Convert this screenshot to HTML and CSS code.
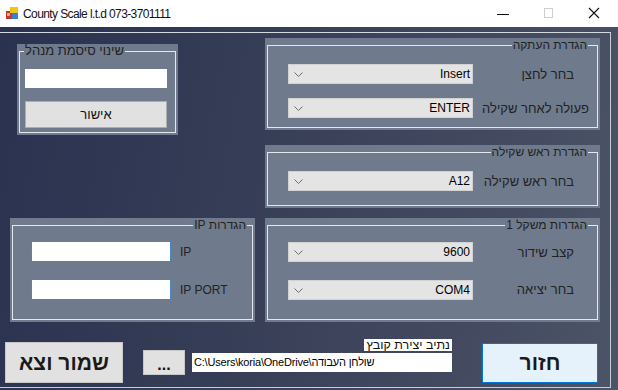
FILE: index.html
```html
<!DOCTYPE html>
<html lang="he">
<head>
	<meta charset="UTF-8">
	<title>County Scale</title>
	<link rel="stylesheet" href="styles.css">
</head>
<body>
	<div class="window">
		<div class="titlebar">
			<svg class="app-icon" width="13" height="13" viewBox="0 0 13 13">
				<rect x="0" y="4" width="6" height="8" fill="#c0392b"/>
				<rect x="4" y="0" width="8" height="6" fill="#f1c40f"/>
				<rect x="6" y="6" width="6" height="6" fill="#3b7dd8"/>
				<rect x="1" y="6" width="3" height="3" fill="#e8a090"/>
			</svg>
			<span class="title">County Scale l.t.d 073-3701111</span>
			<div class="controls">
				<svg width="46" height="26" viewBox="0 0 46 26"><line x1="17" y1="13.5" x2="29" y2="13.5" stroke="#111" stroke-width="1"/></svg>
				<svg width="46" height="26" viewBox="0 0 46 26"><rect x="18.5" y="7.5" width="8" height="9" fill="none" stroke="#cfcfcf" stroke-width="1"/></svg>
				<svg width="46" height="26" viewBox="0 0 46 26"><path d="M17 7 L27 17 M27 7 L17 17" stroke="#111" stroke-width="1.1" fill="none"/></svg>
			</div>
		</div>

		<div class="client">
			<div class="frame">
				<div class="upper">
					<div class="group admin">
						<fieldset dir="ltr">
							<legend dir="rtl">שינוי סיסמת מנהל</legend>
							<div class="textbox pass"></div>
							<div class="button ok">אישור</div>
						</fieldset>
					</div>

					<div class="stack">
						<div class="group copy">
							<fieldset dir="rtl">
								<legend>הגדרת העתקה</legend>
								<div class="row first">
									<span class="label">בחר לחצן</span>
									<div class="combo"><svg width="9" height="5" viewBox="0 0 9 5"><polyline points="0.5,0.5 4.5,4.5 8.5,0.5" fill="none" stroke="#6d6d6d"/></svg><span>Insert</span></div>
								</div>
								<div class="row second">
									<span class="label long">פעולה לאחר שקילה</span>
									<div class="combo"><svg width="9" height="5" viewBox="0 0 9 5"><polyline points="0.5,0.5 4.5,4.5 8.5,0.5" fill="none" stroke="#6d6d6d"/></svg><span>ENTER</span></div>
								</div>
							</fieldset>
						</div>

						<div class="group head">
							<fieldset dir="rtl">
								<legend>הגדרת ראש שקילה</legend>
								<div class="row first">
									<span class="label">בחר ראש שקילה</span>
									<div class="combo"><svg width="9" height="5" viewBox="0 0 9 5"><polyline points="0.5,0.5 4.5,4.5 8.5,0.5" fill="none" stroke="#6d6d6d"/></svg><span>A12</span></div>
								</div>
							</fieldset>
						</div>
					</div>
				</div>

				<div class="middle">
					<div class="group ip">
						<fieldset dir="rtl">
							<legend class="near">הגדרות IP</legend>
							<div class="row ltr first">
								<div class="textbox net"></div>
								<span class="label">IP</span>
							</div>
							<div class="row ltr second">
								<div class="textbox net"></div>
								<span class="label">IP PORT</span>
							</div>
						</fieldset>
					</div>

					<div class="group scale">
						<fieldset dir="rtl">
							<legend>הגדרות משקל 1</legend>
							<div class="row first">
								<span class="label">קצב שידור</span>
								<div class="combo"><svg width="9" height="5" viewBox="0 0 9 5"><polyline points="0.5,0.5 4.5,4.5 8.5,0.5" fill="none" stroke="#6d6d6d"/></svg><span>9600</span></div>
							</div>
							<div class="row second">
								<span class="label">בחר יציאה</span>
								<div class="combo"><svg width="9" height="5" viewBox="0 0 9 5"><polyline points="0.5,0.5 4.5,4.5 8.5,0.5" fill="none" stroke="#6d6d6d"/></svg><span>COM4</span></div>
							</div>
						</fieldset>
					</div>
				</div>

				<div class="bottom">
					<div class="button big save">שמור וצא</div>
					<div class="button dots">...</div>
					<div class="path">
						<span class="path-label">נתיב יצירת קובץ</span>
						<div class="path-box">C:\Users\koria\OneDrive\שולחן העבודה</div>
					</div>
					<div class="button big back">חזור</div>
				</div>
			</div>
		</div>
	</div>
</body>
</html>
```

FILE: styles.css
```css
* {
	box-sizing: border-box;
}

body {
	margin: 0;
	font-family: "Liberation Sans", Arial, sans-serif;
	font-size: 12px;
	color: #000;
	background: #fff;
}

.window {
	width: 618px;
	height: 390px;
	display: flex;
	flex-direction: column;
	overflow: hidden;
}

/* title bar */
.titlebar {
	height: 27px;
	background: #fff;
	display: flex;
	align-items: center;
	flex: none;
}

.app-icon {
	margin-left: 6px;
}

.title {
	margin-left: 4px;
	font-size: 12px;
	letter-spacing: -0.6px;
	color: #111;
}

.controls {
	margin-left: auto;
	display: flex;
}

.controls svg {
	display: block;
}

/* client area */
.client {
	flex: 1;
	background: linear-gradient(100deg, #2b3250 0%, #363d56 40%, #434a60 75%, #4c5467 100%);
	padding-top: 5px;
}

.frame {
	width: 611px;
	height: 356px;
	border-top: 1px solid #d4d9e0;
	border-right: 1px solid #c8cdd5;
	border-bottom: 1px solid #c8cdd5;
}

.upper {
	display: flex;
	justify-content: space-between;
	align-items: flex-start;
}

.stack {
	width: 335px;
	margin-right: 10px;
	margin-top: 5px;
}

.middle {
	display: flex;
	justify-content: space-between;
	margin-top: 10px;
}

/* group boxes */
.group {
	background: #6f7b8c;
	padding: 0 2px 2px;
}

.group fieldset {
	height: 100%;
	margin: 0;
	padding: 0;
	min-width: 0;
	border: 1px solid #e4e8ec;
}

.group legend {
	padding: 0 1px;
	margin-right: 9px;
	font-size: 12px;
	line-height: 14px;
	color: #222;
}

.group legend.near {
	margin-right: 5px;
}

.admin {
	width: 161px;
	height: 91px;
	margin-left: 17px;
	margin-top: 11px;
}

.admin legend {
	margin-left: 4px;
	margin-right: 0;
	font-size: 13px;
}

.copy {
	height: 92px;
}

.head {
	height: 63px;
	margin-top: 15px;
}

.ip {
	width: 245px;
	height: 104px;
	margin-left: 10px;
}

.scale {
	width: 335px;
	height: 104px;
	margin-right: 10px;
}

/* rows */
.row {
	display: flex;
	justify-content: space-between;
	align-items: center;
	height: 20px;
}

.copy .row.first,
.head .row.first {
	margin-top: 12px;
}

.copy .row.second {
	margin-top: 14px;
}

.scale .row.first {
	margin-top: 10px;
}

.scale .row.second {
	margin-top: 17px;
	height: 21px;
}

.label {
	margin-right: 23px;
	font-size: 13px;
	color: #222;
	white-space: nowrap;
}

.label.long {
	margin-right: 8px;
}

.combo {
	width: 185px;
	height: 20px;
	margin-left: 20px;
	background: #e4e4e4;
	border: 1px solid #d2d2d2;
	display: flex;
	align-items: center;
	direction: ltr;
	padding: 0 2px 0 5px;
	font-size: 12px;
}

.combo svg {
	display: block;
	margin-top: 1px;
}

.combo span {
	margin-left: auto;
}

/* ip rows */
.row.ltr {
	direction: ltr;
	justify-content: flex-start;
	height: 21px;
}

.ip .row.first {
	margin-top: 9px;
}

.ip .row.second {
	margin-top: 17px;
}

.ip .label {
	margin: 0 0 0 9px;
	font-size: 12px;
}

.textbox {
	background: #fff;
}

.textbox.net {
	width: 140px;
	height: 21px;
	margin-left: 18px;
	border: 1px solid #4a86c0;
}

.textbox.pass {
	width: 142px;
	height: 19px;
	margin: 11px 0 0 5px;
}

/* buttons */
.button {
	background: #e1e1e1;
	border: 1px solid #adadad;
	display: flex;
	align-items: center;
	justify-content: center;
	color: #111;
}

.ok {
	width: 142px;
	height: 27px;
	margin: 13px 0 0 5px;
	font-size: 13px;
}

.bottom {
	display: flex;
	align-items: flex-start;
	margin-top: 17px;
}

.big {
	font-size: 21px;
	font-weight: bold;
	color: #1a1a1a;
}

.save {
	width: 118px;
	height: 41px;
	margin: 3px 0 0 5px;
	border-color: #c8c8c8;
}

.dots {
	width: 42px;
	height: 25px;
	margin: 11px 0 0 20px;
	font-size: 16px;
	font-weight: bold;
	align-items: flex-end;
	padding-bottom: 2px;
	line-height: 14px;
	border-color: #c8c8c8;
}

.path {
	width: 260px;
	margin-left: 7px;
	display: flex;
	flex-direction: column;
	align-items: flex-end;
}

.path-label {
	background: #fff;
	font-size: 12.5px;
	line-height: 12px;
	height: 12px;
	padding: 0 2px;
	color: #111;
}

.path-box {
	width: 260px;
	height: 19px;
	margin-top: 2px;
	background: #fff;
	font-size: 11px;
	line-height: 19px;
	padding-left: 2px;
	white-space: nowrap;
	overflow: hidden;
	letter-spacing: -0.2px;
}

.back {
	width: 116px;
	height: 40px;
	margin: 4px 0 0 30px;
	background: #e5f1fb;
	border-color: #0078d7;
}
```
